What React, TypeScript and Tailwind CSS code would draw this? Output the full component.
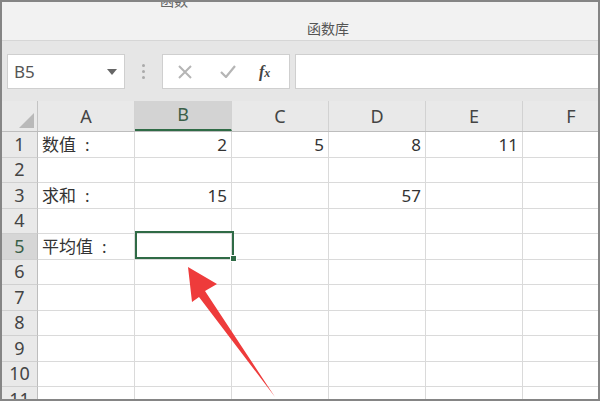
import React from 'react';

const cols = ['A', 'B', 'C', 'D', 'E', 'F'];
const colW = [97, 97, 97, 97, 97, 97];

const data: Record<number, (string | null)[]> = {
  1: ['数值', '2', '5', '8', '11', '1'],
  3: ['求和', '15', null, '57', null, null],
  5: ['平均值', null, null, null, null, null],
};

function Cell({ ci, value }: { ci: number; value: string | null }) {
  const isLabel = ci === 0;
  return (
    <div
      className={`shrink-0 h-full border-r border-b border-[#dadada] flex items-center overflow-visible whitespace-nowrap text-[17px] text-[#333] ${
        isLabel ? 'justify-start pl-[4px]' : 'justify-end pr-[4px]'
      }`}
      style={{ width: colW[ci] }}
    >
      {value}
      {isLabel && value && <span className="ml-[9px]">:</span>}
    </div>
  );
}

export default function App() {
  const rows = [1, 2, 3, 4, 5, 6, 7, 8, 9, 10, 11];
  return (
    <div
      className="relative w-[600px] h-[401px] overflow-hidden bg-white border-2 border-[#858585]"
      style={{ fontFamily: '"Noto Sans", "Noto Sans CJK SC", sans-serif' }}
    >
      {/* Ribbon bottom */}
      <div className="relative h-[39px] bg-[#f2f2f2] border-b border-[#d6d6d6]">
        <div className="absolute left-[158px] top-[-12px] text-[14px] text-[#666]">函数</div>
        <div className="absolute left-[305px] top-[16px] text-[14px] text-[#555]">函数库</div>
      </div>

      {/* Formula bar */}
      <div className="h-[60px] bg-[#e6e6e6] flex items-center pt-[1px]">
        <div className="ml-[5px] w-[118px] h-[35px] bg-white border border-[#cfcfcf] flex items-center justify-between pl-[6px] pr-[7px]">
          <span className="text-[17px] text-[#555]">B5</span>
          <svg width="10" height="6" viewBox="0 0 10 6">
            <path d="M0 0 L10 0 L5 6 Z" fill="#666" />
          </svg>
        </div>
        <div className="w-[37px] flex flex-col items-center gap-[3px]">
          <div className="w-[3px] h-[3px] rounded-full bg-[#aaa]" />
          <div className="w-[3px] h-[3px] rounded-full bg-[#aaa]" />
          <div className="w-[3px] h-[3px] rounded-full bg-[#aaa]" />
        </div>
        <div className="w-[128px] h-[35px] bg-white border border-[#cfcfcf] flex items-center">
          <svg className="ml-[15px]" width="14" height="14" viewBox="0 0 14 14">
            <path d="M1 1 L13 13 M13 1 L1 13" stroke="#b5b5b5" strokeWidth="2" />
          </svg>
          <svg className="ml-[28px]" width="16" height="13" viewBox="0 0 16 13">
            <path d="M1 7 L6 12 L15 1" stroke="#b5b5b5" strokeWidth="2.2" fill="none" />
          </svg>
          <span className="ml-[23px] text-[16px] italic font-bold text-[#444]" style={{ fontFamily: '"Liberation Serif", serif' }}>
            f<span className="text-[12px]">x</span>
          </span>
        </div>
        <div className="ml-[5px] flex-1 h-[35px] bg-white border border-[#cfcfcf] border-r-0" />
      </div>

      {/* Grid */}
      <div className="relative">
        {/* header row */}
        <div className="flex h-[31px] bg-[#e9e9e9] border-b border-[#bdbdbd]">
          <div className="relative w-[36px] shrink-0 border-r border-[#c4c4c4]">
            <svg className="absolute right-[3px] bottom-[3px]" width="15" height="15" viewBox="0 0 15 15">
              <path d="M15 0 L15 15 L0 15 Z" fill="#b9b9b9" />
            </svg>
          </div>
          {cols.map((c, i) => (
            <div
              key={c}
              className={`shrink-0 h-full flex items-end justify-center pb-[1px] text-[18px] border-r border-[#d2d2d2] ${
                c === 'B' ? 'bg-[#d3d3d3] text-[#3a5f48] border-b-2 border-b-[#2f6b46]' : 'text-[#444]'
              }`}
              style={{ width: colW[i] }}
            >
              {c}
            </div>
          ))}
        </div>
        {rows.map((r) => (
          <div key={r} className="flex h-[25.5px]">
            <div
              className={`w-[36px] shrink-0 flex items-center justify-center text-[18px] border-r border-b border-r-[#bdbdbd] border-b-[#d0d0d0] ${
                r === 5 ? 'bg-[#d6d6d6] text-[#3a5f48]' : 'bg-[#e9e9e9] text-[#444]'
              }`}
            >
              {r}
            </div>
            {cols.map((c, ci) => (
              <Cell key={c} ci={ci} value={data[r]?.[ci] ?? null} />
            ))}
          </div>
        ))}

        {/* selection B5 */}
        <div className="absolute left-[133px] top-[130px] w-[99px] h-[28px] border-2 border-[#2f6b46]" />
        <div className="absolute left-[228px] top-[154px] w-[7px] h-[7px] bg-[#2f6b46] border border-white" />
      </div>

      {/* red arrow */}
      <svg className="absolute left-0 top-0 pointer-events-none" width="600" height="401" viewBox="0 0 600 401">
        <path
          d="M186 265 L190 300 L197 295 L273 395 L203 289 L215 282 Z"
          fill="#ee3b3b"
        />
      </svg>
    </div>
  );
}
